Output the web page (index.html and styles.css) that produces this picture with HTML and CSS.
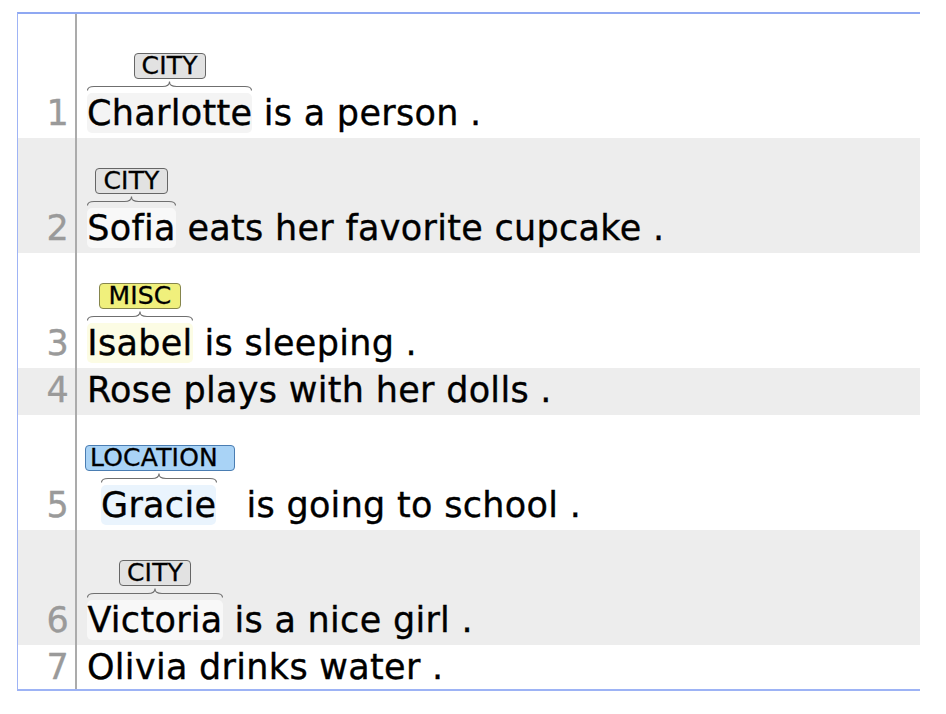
FILE: index.html
```html
<!DOCTYPE html>
<html>
<head>
<meta charset="utf-8">
<link rel="stylesheet" href="styles.css">
</head>
<body>
<div class="doc">
  <div class="row first">
    <div class="num">1</div>
    <div class="txt"><span class="ann"><span class="lbl lbl-city">CITY</span><svg class="brace" width="165" height="12" viewBox="0 0 165 12"><path d="M0.5,11.5 C0.5,8.5 2.5,7.5 7,7.5 L75.5,7.5 C80.5,7.5 82.5,6 82.5,2.5 C82.5,6 84.5,7.5 89.5,7.5 L158,7.5 C162.5,7.5 164.5,8.5 164.5,11.5"/></svg><span class="w hl-city">Charlotte</span></span> is a person .</div>
  </div>
  <div class="row alt">
    <div class="num">2</div>
    <div class="txt"><span class="ann"><span class="lbl lbl-city">CITY</span><svg class="brace" width="89" height="12" viewBox="0 0 89 12"><path d="M0.5,11.5 C0.5,8.5 2.5,7.5 7,7.5 L37.5,7.5 C42.5,7.5 44.5,6 44.5,2.5 C44.5,6 46.5,7.5 51.5,7.5 L82,7.5 C86.5,7.5 88.5,8.5 88.5,11.5"/></svg><span class="w hl-city">Sofia</span></span> eats her favorite cupcake .</div>
  </div>
  <div class="row">
    <div class="num">3</div>
    <div class="txt"><span class="ann"><span class="lbl lbl-misc">MISC</span><svg class="brace" width="106" height="12" viewBox="0 0 106 12"><path d="M0.5,11.5 C0.5,8.5 2.5,7.5 7,7.5 L46,7.5 C51,7.5 53,6 53,2.5 C53,6 55,7.5 60,7.5 L99,7.5 C103.5,7.5 105.5,8.5 105.5,11.5"/></svg><span class="w hl-misc">Isabel</span></span> is sleeping .</div>
  </div>
  <div class="row alt plain">
    <div class="num">4</div>
    <div class="txt">Rose plays with her dolls .</div>
  </div>
  <div class="row">
    <div class="num">5</div>
    <div class="txt"><span class="ann ann-loc"><span class="lbl lbl-loc">LOCATION</span><svg class="brace" width="116" height="12" viewBox="0 0 116 12"><path d="M0.5,11.5 C0.5,8.5 2.5,7.5 7,7.5 L51,7.5 C56,7.5 58,6 58,2.5 C58,6 60,7.5 65,7.5 L109,7.5 C113.5,7.5 115.5,8.5 115.5,11.5"/></svg><span class="w hl-loc">Gracie</span></span> is going to school .</div>
  </div>
  <div class="row alt">
    <div class="num">6</div>
    <div class="txt"><span class="ann"><span class="lbl lbl-city">CITY</span><svg class="brace" width="136" height="12" viewBox="0 0 136 12"><path d="M0.5,11.5 C0.5,8.5 2.5,7.5 7,7.5 L61,7.5 C66,7.5 68,6 68,2.5 C68,6 70,7.5 75,7.5 L129,7.5 C133.5,7.5 135.5,8.5 135.5,11.5"/></svg><span class="w hl-city">Victoria</span></span> is a nice girl .</div>
  </div>
  <div class="row plain last">
    <div class="num">7</div>
    <div class="txt">Olivia drinks water .</div>
  </div>
</div>
</body>
</html>
```

FILE: styles.css
```css
html, body {
  margin: 0;
  padding: 0;
  background: #ffffff;
}

body {
  padding: 12px 0 0 17px;
  font-family: "DejaVu Sans", Verdana, sans-serif;
  color: #000;
}

.doc {
  width: 903px;
  box-sizing: border-box;
  border-top: 2px solid #8fa8f2;
  border-left: 1px solid #9fb4f5;
  border-bottom: 2px solid #9db3f5;
  overflow: hidden;
}

.row {
  display: grid;
  grid-template-columns: 57px 1fr;
  font-size: 35px;
  line-height: 44px;
  letter-spacing: 0.3px;
  -webkit-text-stroke: 0.35px currentColor;
}

.row.alt {
  background: #ededed;
}

.num {
  display: flex;
  align-items: flex-end;
  justify-content: flex-end;
  padding: 0 6px 3px 0;
  color: #9a9a9a;
}

.txt {
  border-left: 2px solid #ababab;
  padding: 30px 0 3px 10px;
  white-space: nowrap;
}

.row.first .txt {
  padding-top: 39px;
}

.row.plain .txt {
  padding-top: 0;
}

.row.last .txt,
.row.last .num {
  padding-bottom: 0;
}

.ann {
  display: inline-block;
  vertical-align: baseline;
  text-align: center;
}

.ann-loc {
  margin-left: -2px;
}

.ann-loc .brace,
.ann-loc .w {
  margin-left: 16px;
  margin-right: auto;
}

.lbl {
  display: block;
  width: fit-content;
  margin: 0 auto;
  box-sizing: border-box;
  height: 26px;
  font-size: 25px;
  line-height: 23px;
  letter-spacing: 0.2px;
  padding: 0 7px;
  border: 1.5px solid #666666;
  border-radius: 4px;
  text-align: left;
  -webkit-text-stroke: 0.3px currentColor;
}

.lbl-city {
  background: #e2e2e2;
}

.lbl-misc {
  background: #f0f07c;
  border-color: #85854d;
  padding: 0 8px;
}

.lbl-loc {
  background: #a9d3f6;
  border-color: #4a7db2;
  padding: 0 16px 0 4px;
}

.brace {
  display: block;
  margin: 0 auto;
}

.brace path {
  fill: none;
  stroke: #6f6f6f;
  stroke-width: 1.1;
}

.w {
  display: block;
  width: fit-content;
  margin: 2px auto;
  line-height: 40px;
  border-radius: 5px;
}

.hl-city {
  background: #f4f4f4;
}

.row.alt .hl-city {
  background: #f8f8f8;
}

.hl-misc {
  background: #fcfce4;
}

.hl-loc {
  background: #eaf4fd;
}
```
